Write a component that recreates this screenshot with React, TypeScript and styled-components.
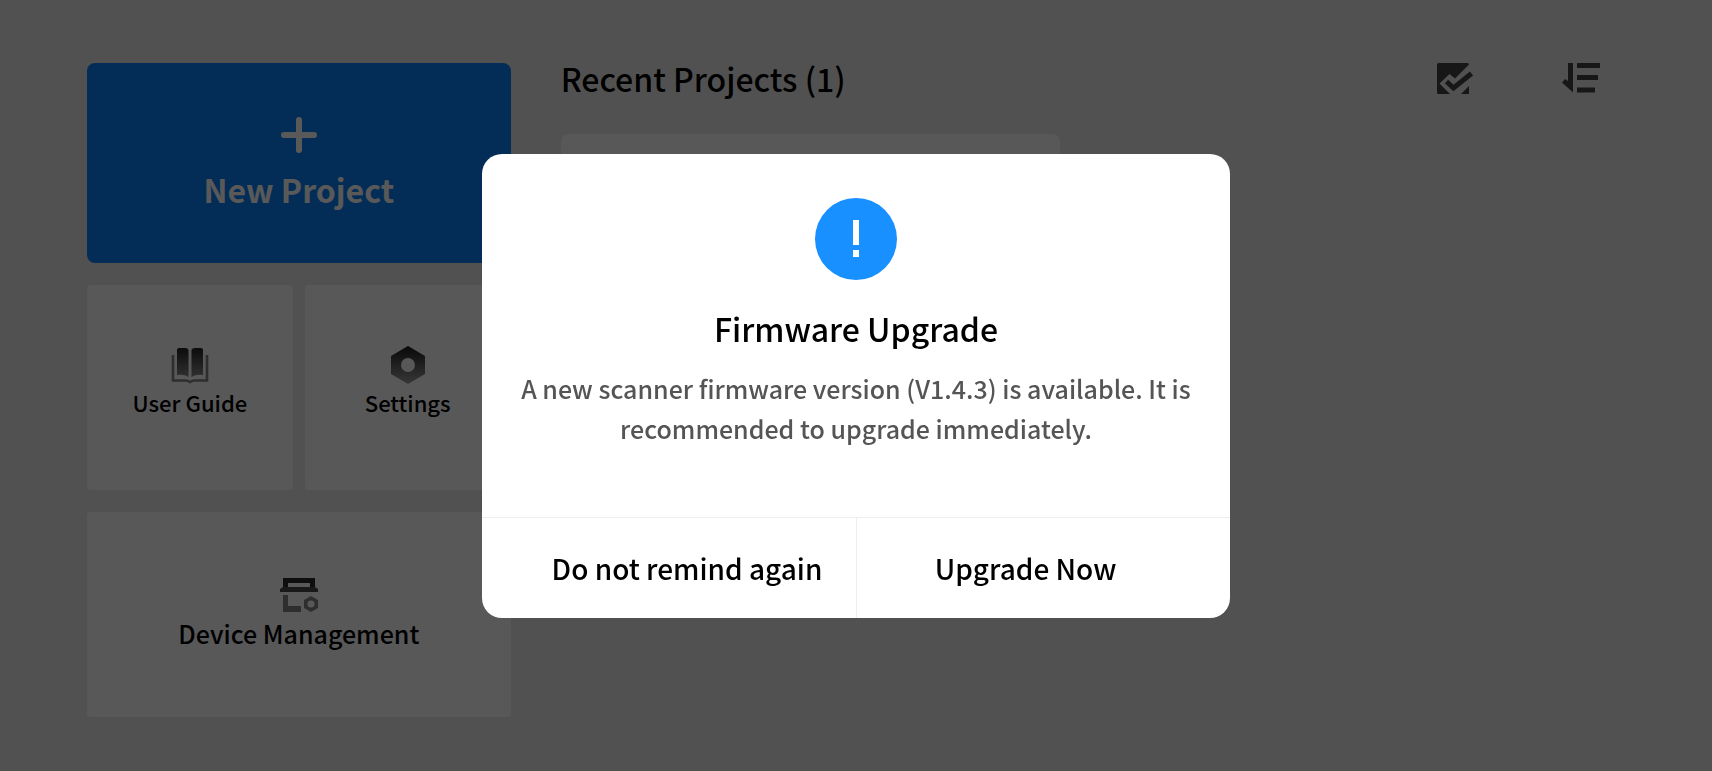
import React from 'react';
import styled, { createGlobalStyle } from 'styled-components';

const GlobalStyle = createGlobalStyle`
  *, *::before, *::after { box-sizing: border-box; }
  body {
    margin: 0;
    background: #e9e9e9;
    color: #000;
    font-family: 'Noto Sans CJK SC', 'Noto Sans', sans-serif;
    font-weight: 500;
  }
  h1, h2, p { margin: 0; font-weight: 500; }
  button { border: 0; color: inherit; font: inherit; cursor: pointer; }
`;

const Page = styled.div`
  display: grid;
  grid-template-columns: minmax(320px, 28%) 1fr;
  gap: 50px;
  min-height: 100vh;
  padding: 63px 112px 52px 87px;
`;

const Sidebar = styled.nav`
  display: grid;
  grid-template-columns: 1fr 1fr;
  grid-template-rows: 200px 205px 205px;
  gap: 22px 12px;
`;

const Tile = styled.button`
  display: flex;
  flex-direction: column;
  align-items: center;
  justify-content: center;
  padding: 0 0 10px;
  border-radius: 4px;
  background: #fbfbfb;
  font-size: 22px;
  line-height: 36px;
`;

const WideTile = styled(Tile)`
  grid-column: 1 / -1;
  gap: 2px;
  padding: 0 0 2px;
  font-size: 25px;
`;

const PrimaryTile = styled(WideTile)`
  gap: 12px;
  padding: 4px 0 0;
  border-radius: 8px;
  background: #0981f6;
  color: #fff;
  font-size: 32px;
  font-weight: 700;
  line-height: 48px;
`;

const Recent = styled.main`
  min-width: 0;
`;

const RecentHeader = styled.header`
  display: flex;
  align-items: flex-start;
  justify-content: space-between;
`;

const RecentTitle = styled.h1`
  font-size: 32px;
  line-height: 30px;
`;

const Tools = styled.div`
  display: flex;
  gap: 88px;
`;

const ToolButton = styled.button`
  display: flex;
  align-items: flex-start;
  padding: 0;
  background: none;
`;

const ProjectCard = styled.article`
  width: 48%;
  min-width: 400px;
  height: 240px;
  margin-top: 38px;
  border-radius: 8px;
  background: #fbfbfb;
`;

const Backdrop = styled.div`
  position: fixed;
  inset: 0;
  display: flex;
  align-items: center;
  justify-content: center;
  background: rgba(0, 0, 0, 0.65);
`;

const Dialog = styled.section`
  width: 748px;
  max-width: 92vw;
  overflow: hidden;
  border-radius: 20px;
  background: #fff;
`;

const DialogBody = styled.div`
  display: flex;
  flex-direction: column;
  align-items: center;
  padding: 44px 32px 69px;
  text-align: center;
`;

const DialogTitle = styled.h2`
  margin-top: 24px;
  font-size: 32px;
  line-height: 48px;
`;

const Message = styled.p`
  margin-top: 16px;
  color: #555;
  font-size: 25px;
  line-height: 40px;
`;

const Actions = styled.footer`
  display: grid;
  grid-template-columns: 1fr 1fr;
  border-top: 1px solid #eee;
`;

const Action = styled.button`
  height: 100px;
  padding: 0 12px 0 48px;
  background: none;
  font-size: 28px;
  line-height: 40px;
  white-space: nowrap;

  & + & {
    padding: 0 36px 0 0;
    border-left: 1px solid #eee;
  }
`;

const PlusIcon = () => (
  <svg width="36" height="36" viewBox="0 0 36 36" fill="none" stroke="currentColor" strokeWidth="6" strokeLinecap="round" aria-hidden="true">
    <path d="M18 3v30M3 18h30" />
  </svg>
);

const BookIcon = () => (
  <svg width="38" height="38" viewBox="0 0 38 38" aria-hidden="true">
    <defs>
      <linearGradient id="book" x1="0" y1="0" x2="0" y2="1">
        <stop offset="0" stopColor="#222" />
        <stop offset="1" stopColor="#8a8a8a" />
      </linearGradient>
    </defs>
    <path d="M6 4Q6 2 8 2H14Q17 2 17.500 4V31Q13 28 6 29ZM20.500 4Q21 2 24 2H30Q32 2 32 4V29Q25 28 20.500 31Z" fill="url(#book)" />
    <path d="M2 9V34.500H14Q17 34.500 19 36Q21 34.500 24 34.500H36V9" fill="none" stroke="#858585" strokeWidth="2.600" />
  </svg>
);

const NutIcon = () => (
  <svg width="38" height="38" viewBox="0 0 38 38" aria-hidden="true">
    <defs>
      <linearGradient id="nut" x1="0" y1="0" x2="0" y2="1">
        <stop offset="0" stopColor="#181818" />
        <stop offset="1" stopColor="#a0a0a0" />
      </linearGradient>
    </defs>
    <path fillRule="evenodd" d="M19 0 36 10V28L19 38 2 28V10ZM19 12a7 7 0 1 0 0 14a7 7 0 0 0 0-14Z" fill="url(#nut)" />
  </svg>
);

const DeviceIcon = () => (
  <svg width="40" height="36" viewBox="0 0 40 36" aria-hidden="true">
    <path d="M4 1H36V10H31V6H9V10H4Z" fill="#282828" />
    <path d="M4 10H36L39 12V15H1V12Z" fill="#484848" />
    <path d="M4 18H9V29H22V35H4Z" fill="#858585" />
    <path fillRule="evenodd" d="M32 19 39 23V31L32 35 25 31V23ZM32 23.500a3.500 3.500 0 1 0 0 7a3.500 3.500 0 0 0 0-7Z" fill="#858585" />
  </svg>
);

const SelectIcon = () => (
  <svg width="37" height="33" viewBox="0 0 37 33" aria-hidden="true">
    <path d="M1.500 0H30.500Q32 0 32 1.500L18 15.500 12.500 11 2.500 20.500 13 31H1.500Q0 31 0 29.500V1.500Q0 0 1.500 0ZM32 23V31H24Z" fill="#424242" />
    <path d="M9.500 18.500 16.500 25 34.500 10.500" fill="none" stroke="#424242" strokeWidth="5" />
  </svg>
);

const SortIcon = () => (
  <svg width="38" height="30" viewBox="0 0 38 30" aria-hidden="true">
    <path d="M6 0H11V29.500L0 19.500 3 16 6 18Z" fill="#424242" />
    <path d="M15 2.500H38M15 14.500H36M15 27H33" fill="none" stroke="#424242" strokeWidth="5" />
  </svg>
);

const AlertIcon = () => (
  <svg width="82" height="82" viewBox="0 0 82 82" aria-hidden="true">
    <circle cx="41" cy="41" r="41" fill="#1890ff" />
    <path d="M38 22h6v25h-6zM38 52h6v7h-6z" fill="#fff" />
  </svg>
);

export default function App() {
  return (
    <>
      <GlobalStyle />
      <Page>
        <Sidebar>
          <PrimaryTile>
            <PlusIcon />
            New Project
          </PrimaryTile>
          <Tile>
            <BookIcon />
            User Guide
          </Tile>
          <Tile>
            <NutIcon />
            Settings
          </Tile>
          <WideTile>
            <DeviceIcon />
            Device Management
          </WideTile>
        </Sidebar>
        <Recent>
          <RecentHeader>
            <RecentTitle>Recent Projects (1)</RecentTitle>
            <Tools>
              <ToolButton aria-label="Select projects">
                <SelectIcon />
              </ToolButton>
              <ToolButton aria-label="Sort projects">
                <SortIcon />
              </ToolButton>
            </Tools>
          </RecentHeader>
          <ProjectCard />
        </Recent>
      </Page>
      <Backdrop>
        <Dialog role="dialog" aria-modal="true" aria-labelledby="dialog-title">
          <DialogBody>
            <AlertIcon />
            <DialogTitle id="dialog-title">Firmware Upgrade</DialogTitle>
            <Message>
              A new scanner firmware version (V1.4.3) is available. It is recommended to upgrade immediately.
            </Message>
          </DialogBody>
          <Actions>
            <Action>Do not remind again</Action>
            <Action>Upgrade Now</Action>
          </Actions>
        </Dialog>
      </Backdrop>
    </>
  );
}
